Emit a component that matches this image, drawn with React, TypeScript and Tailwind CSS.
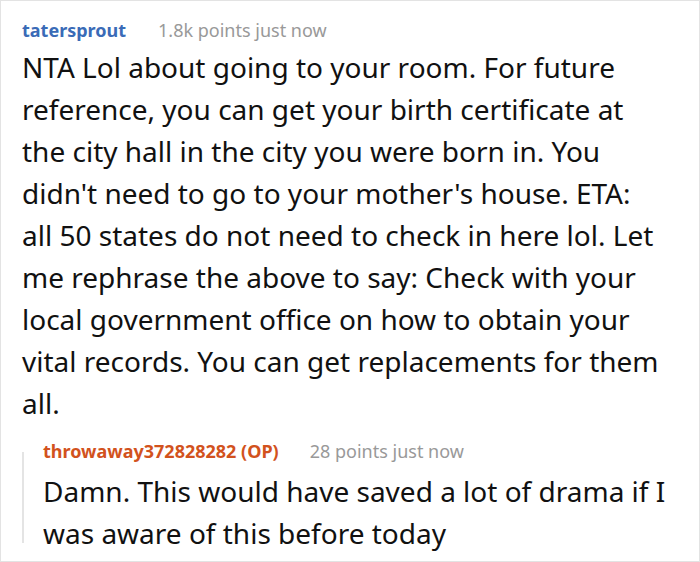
export default function App() {
  return (
    <div className="w-[700px] h-[562px] border border-[#e3e3e3] bg-white pl-[21px] pt-[17px] font-['Noto_Sans',sans-serif] overflow-hidden">
      <div className="flex items-baseline text-[18px] leading-[24px]">
        <span className="font-bold text-[#3a6bb7]">tatersprout</span>
        <span className="ml-[32px] text-[#999999]">1.8k points just now</span>
      </div>
      <p className="mt-[4px] text-[28px] leading-[42px] text-[#111111] whitespace-nowrap">
        NTA Lol about going to your room. For future
        <br />
        reference, you can get your birth certificate at
        <br />
        the city hall in the city you were born in. You
        <br />
        didn't need to go to your mother's house. ETA:
        <br />
        all 50 states do not need to check in here lol. Let
        <br />
        me rephrase the above to say: Check with your
        <br />
        local government office on how to obtain your
        <br />
        vital records. You can get replacements for them
        <br />
        all.
      </p>
      <div className="mt-[15px] flex">
        <div className="mt-[13px] h-[91px] w-[2px] bg-[#e4e4e4]" />
        <div className="pl-[19px]">
          <div className="flex items-baseline text-[18px] leading-[24px]">
            <span className="font-bold text-[#d2521d]">throwaway372828282 (OP)</span>
            <span className="ml-[31px] text-[#999999]">28 points just now</span>
          </div>
          <p className="mt-[7px] text-[28px] leading-[42px] text-[#111111] whitespace-nowrap">
            Damn. This would have saved a lot of drama if I
            <br />
            was aware of this before today
          </p>
        </div>
      </div>
    </div>
  );
}
